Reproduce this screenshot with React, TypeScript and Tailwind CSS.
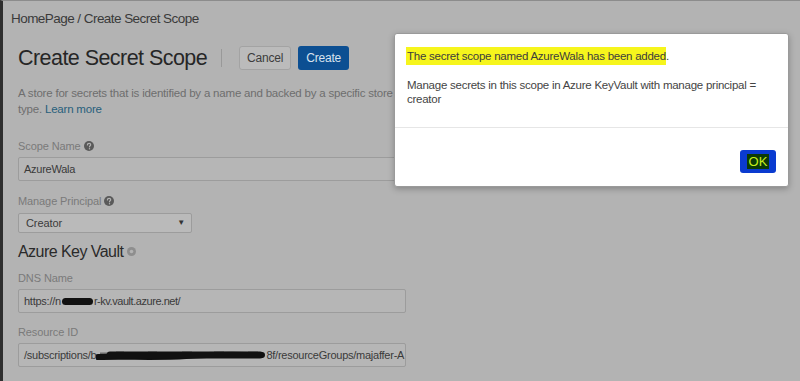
import React from "react";

function HelpIcon() {
  return (
    <svg width="10" height="10" viewBox="0 0 10 10" className="inline-block ml-[3px] -mt-[2px]">
      <circle cx="5" cy="5" r="5" fill="#5a5a5a" />
      <path d="M3.4 3.9c0-1 .7-1.6 1.7-1.6s1.6.6 1.6 1.4c0 1.1-1.2 1.1-1.2 2.1" stroke="#b3b3b3" strokeWidth="1.2" fill="none" strokeLinecap="round" />
      <circle cx="5.5" cy="7.7" r="0.7" fill="#b3b3b3" />
    </svg>
  );
}

function Field({ label, help, children }: { label: string; help?: boolean; children: React.ReactNode }) {
  return (
    <div className="flex flex-col">
      <div className="text-[11px] leading-[14px] text-[#7a7a7a] h-[14px] tracking-[-0.1px]">
        {label}
        {help && <HelpIcon />}
      </div>
      {children}
    </div>
  );
}

const inputCls =
  "w-[388px] h-[24px] border border-[#9c9c9c] rounded-[2px] bg-[#b6b6b6] pl-[5px] flex items-center text-[11px] text-[#3a3a3a] tracking-[-0.25px] whitespace-nowrap overflow-hidden";

export default function App() {
  return (
    <div className="relative w-[800px] h-[381px] overflow-hidden bg-[#b3b3b3] border-l-[3px] border-l-[#2e2e2e] border-t border-t-[#8c8c8c] font-['Liberation_Sans',Arial,sans-serif]">
      <div className="pl-[8px] pt-[10px] text-[13.5px] leading-[16px] text-[#3a3a3a] tracking-[-0.55px]">
        HomePage / Create Secret Scope
      </div>

      <div className="pl-[15px] flex flex-col">
        <div className="flex items-center mt-[19px] h-[24px]">
          <h1 className="text-[21.5px] leading-[24px] text-[#262626] tracking-[-0.55px]">Create Secret Scope</h1>
          <span className="ml-[14px] w-px h-[18px] bg-[#999]" />
          <button className="ml-[17px] w-[52px] h-[24px] rounded-[3px] border border-[#a3a3a3] bg-[#bbbbbb] text-[12px] text-[#3c3c3c] tracking-[-0.2px]">
            Cancel
          </button>
          <button className="ml-[7px] w-[51px] h-[24px] rounded-[3px] bg-[#0c4f92] text-[12px] text-[#d8e2ee] tracking-[-0.2px]">
            Create
          </button>
        </div>

        <p className="mt-[16px] text-[11.5px] leading-[15.5px] text-[#6e6e6e] tracking-[-0.2px] w-[390px] whitespace-nowrap">
          A store for secrets that is identified by a name and backed by a specific store
          <br />
          type. <span className="text-[#275f7c]">Learn more</span>
        </p>

        <div className="mt-[22px]">
          <Field label="Scope Name" help>
            <div className={`mt-[4px] ${inputCls}`}>AzureWala</div>
          </Field>
        </div>

        <div className="mt-[13px]">
          <Field label="Manage Principal" help>
            <div className="mt-[5px] w-[174px] h-[20px] border border-[#9c9c9c] rounded-[2px] bg-[#bababa] pl-[7px] pr-[6px] flex items-center justify-between text-[11px] text-[#3a3a3a] tracking-[-0.1px]">
              <span>Creator</span>
              <span className="text-[8px] text-[#333]">▼</span>
            </div>
          </Field>
        </div>

        <div className="mt-[9px] text-[16px] leading-[19px] text-[#2a2a2a] tracking-[-0.55px]">
          Azure Key Vault
          <svg width="9" height="9" viewBox="0 0 10 10" className="inline-block ml-[4px] -mt-[2px]">
            <circle cx="5" cy="5" r="5" fill="#8e8e8e" />
            <circle cx="5" cy="5" r="2" fill="#b3b3b3" />
          </svg>
        </div>

        <div className="mt-[10px]">
          <Field label="DNS Name">
            <div className={`mt-[4px] ${inputCls}`}>
              https://n
              <span className="inline-block w-[31px] h-[7px] bg-[#111] rounded-full mx-[1px]" />
              <span className="tracking-[-0.45px]">r-kv.vault.azure.net/</span>
            </div>
          </Field>
        </div>

        <div className="mt-[12px]">
          <Field label="Resource ID">
            <div className={`mt-[4px] ${inputCls}`}>
              /subscriptions/b
              <svg width="170" height="14" viewBox="0 0 170 14" className="shrink-0">
                <path d="M4 6h10M20 5h8M34 6h12M52 5h9M66 6h14M86 5h10M100 6h12M118 5h10M134 6h14M152 5h10" stroke="#6a6a6a" strokeWidth="3" />
                <path d="M2 9 C 30 8, 60 10, 90 8 S 150 7, 166 7" stroke="#111" strokeWidth="6" strokeLinecap="round" fill="none" />
                <path d="M14 7h150" stroke="#111" strokeWidth="7" strokeLinecap="round" />
              </svg>
              8f/resourceGroups/majaffer-A
            </div>
          </Field>
        </div>
      </div>

      {/* modal */}
      <div className="absolute left-[391px] top-[32px] w-[395px] h-[154px] bg-white rounded-[3px] border border-[#9a9a9a] shadow-[0_2px_6px_rgba(0,0,0,0.25)] flex flex-col">
        <div className="px-[12px] pt-[14px] h-[93px] text-[11.5px] text-[#3d3d3d] tracking-[-0.25px]">
          <div className="leading-[16px]">
            <span className="bg-[#f6f51c] py-[3px] -ml-[1px] pl-[1px]">The secret scope named AzureWala has been added</span>
            <span>.</span>
          </div>
          <div className="mt-[14px] leading-[14px] text-[#444]">
            Manage secrets in this scope in Azure KeyVault with manage principal =
            <br />
            creator
          </div>
        </div>
        <div className="h-px bg-[#e6e6e6]" />
        <div className="flex-1 flex items-end justify-end pr-[12px] pb-[13px]">
          <button className="w-[36px] h-[23px] rounded-[3px] bg-[#0a3bd0] flex items-center justify-center">
            <span className="bg-[#0b3a06] text-[#c6f01a] text-[13px] leading-[15px] px-[2px]">OK</span>
          </button>
        </div>
      </div>
    </div>
  );
}
